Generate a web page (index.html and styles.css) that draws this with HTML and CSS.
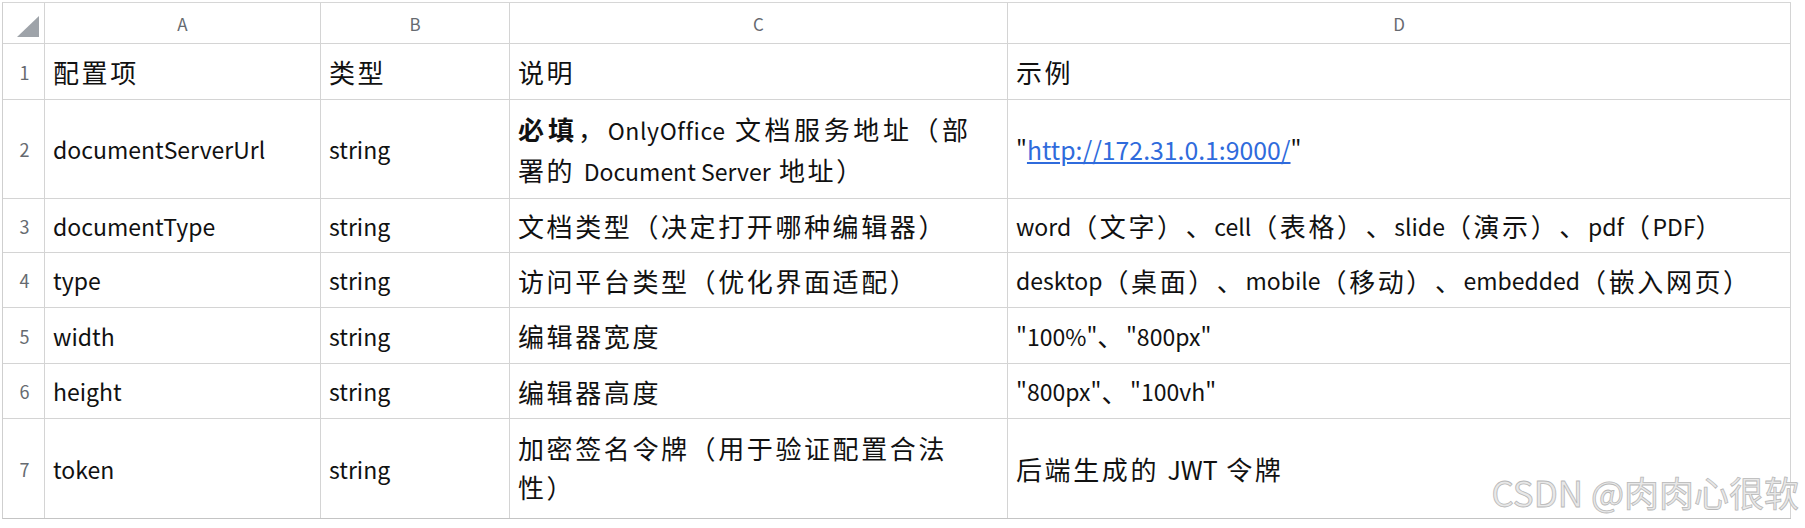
FILE: index.html
```html
<!DOCTYPE html>
<html lang="zh-CN">
<head>
<meta charset="utf-8">
<title>配置项</title>
<link rel="stylesheet" href="styles.css">
</head>
<body>
<div class="page">
  <div class="sheet">
    <div class="corner"><span class="tri"></span></div>
    <div class="colhead">A</div>
    <div class="colhead">B</div>
    <div class="colhead">C</div>
    <div class="colhead">D</div>

    <div class="rowhead">1</div>
    <div class="cell">配置项</div>
    <div class="cell">类型</div>
    <div class="cell">说明</div>
    <div class="cell">示例</div>

    <div class="rowhead">2</div>
    <div class="cell lat">documentServerUrl</div>
    <div class="cell lat">string</div>
    <div class="cell wrap"><span class="first"><b>必填</b>，<span class="en">OnlyOffice</span> 文档服务地址（部</span><br>署的 <span class="en">Document Server</span> 地址）</div>
    <div class="cell lat">"<a class="link" href="#">http://172.31.0.1:9000/</a>"</div>

    <div class="rowhead">3</div>
    <div class="cell lat">documentType</div>
    <div class="cell lat">string</div>
    <div class="cell">文档类型（决定打开哪种编辑器）</div>
    <div class="cell"><span class="en">word</span>（文字）、<span class="en">cell</span>（表格）、<span class="en">slide</span>（演示）、<span class="en">pdf</span>（<span class="en">PDF</span>）</div>

    <div class="rowhead">4</div>
    <div class="cell lat">type</div>
    <div class="cell lat">string</div>
    <div class="cell">访问平台类型（优化界面适配）</div>
    <div class="cell"><span class="en">desktop</span>（桌面）、<span class="en">mobile</span>（移动）、<span class="en">embedded</span>（嵌入网页）</div>

    <div class="rowhead">5</div>
    <div class="cell lat">width</div>
    <div class="cell lat">string</div>
    <div class="cell">编辑器宽度</div>
    <div class="cell"><span class="en">"100%"</span>、<span class="en">"800px"</span></div>

    <div class="rowhead">6</div>
    <div class="cell lat">height</div>
    <div class="cell lat">string</div>
    <div class="cell">编辑器高度</div>
    <div class="cell"><span class="en">"800px"</span>、<span class="en">"100vh"</span></div>

    <div class="rowhead">7</div>
    <div class="cell lat">token</div>
    <div class="cell lat">string</div>
    <div class="cell wrap">加密签名令牌（用于验证配置合法<br>性）</div>
    <div class="cell">后端生成的 <span class="en big">JWT</span> 令牌</div>
  </div>
  <div class="watermark">CSDN @肉肉心很软</div>
</div>
</body>
</html>
```

FILE: styles.css
```css
* { box-sizing: border-box; }

html, body {
  margin: 0;
  padding: 0;
  background: #ffffff;
}

.page {
  position: relative;
  width: 1805px;
  height: 528px;
  padding: 2px 0 0 2px;
}

.sheet {
  display: grid;
  grid-template-columns: 42px 276px 189px 498px 783px;
  grid-template-rows: 41px 56px 99px 54px 55px 56px 55px 99px;
  width: max-content;
  border-left: 1px solid #cfcfcf;
  border-top: 1px solid #d6d6d6;
  border-bottom: 1px solid #c4c4c4;
  font-family: "Noto Sans CJK SC", sans-serif;
  color: #111111;
  text-spacing-trim: space-all;
}

.sheet > div {
  border-right: 1px solid #d4d4d4;
  border-bottom: 1px solid #d4d4d4;
}

.sheet > div:nth-last-child(-n+5) {
  border-bottom: none;
}

.corner {
  display: flex;
  align-items: flex-end;
  justify-content: flex-end;
  padding: 0 5px 6px 0;
}

.tri {
  width: 0;
  height: 0;
  border-left: 22px solid transparent;
  border-bottom: 21px solid #9ea3a9;
}

.colhead {
  display: flex;
  align-items: center;
  justify-content: center;
  font-size: 17px;
  color: #666a70;
}

.rowhead {
  display: flex;
  align-items: center;
  justify-content: center;
  padding-left: 2px;
  font-size: 18px;
  color: #666a70;
}

.cell {
  display: flex;
  align-items: center;
  padding: 0 8px;
  font-size: 26px;
  letter-spacing: 2.6px;
  white-space: pre;
}

.cell.lat {
  font-size: 23px;
  letter-spacing: 0;
}

.en {
  font-size: 23px;
  letter-spacing: 0;
}

.en.big {
  font-size: 25px;
}

.cell.wrap {
  display: block;
  line-height: 39px;
  padding-top: 9px;
}

.first {
  letter-spacing: 3.6px;
}

.first .en {
  letter-spacing: 0.6px;
}

.cell b {
  font-weight: 700;
  letter-spacing: 4px;
}

.link {
  font-size: 24.8px;
  color: #2f6bdc;
  text-decoration: underline;
}

.watermark {
  position: absolute;
  right: 6px;
  bottom: 11px;
  font-family: "Noto Sans CJK SC", sans-serif;
  font-size: 35px;
  color: #e8e8e8;
  -webkit-text-stroke: 0.8px #b8b8b8;
}
```
